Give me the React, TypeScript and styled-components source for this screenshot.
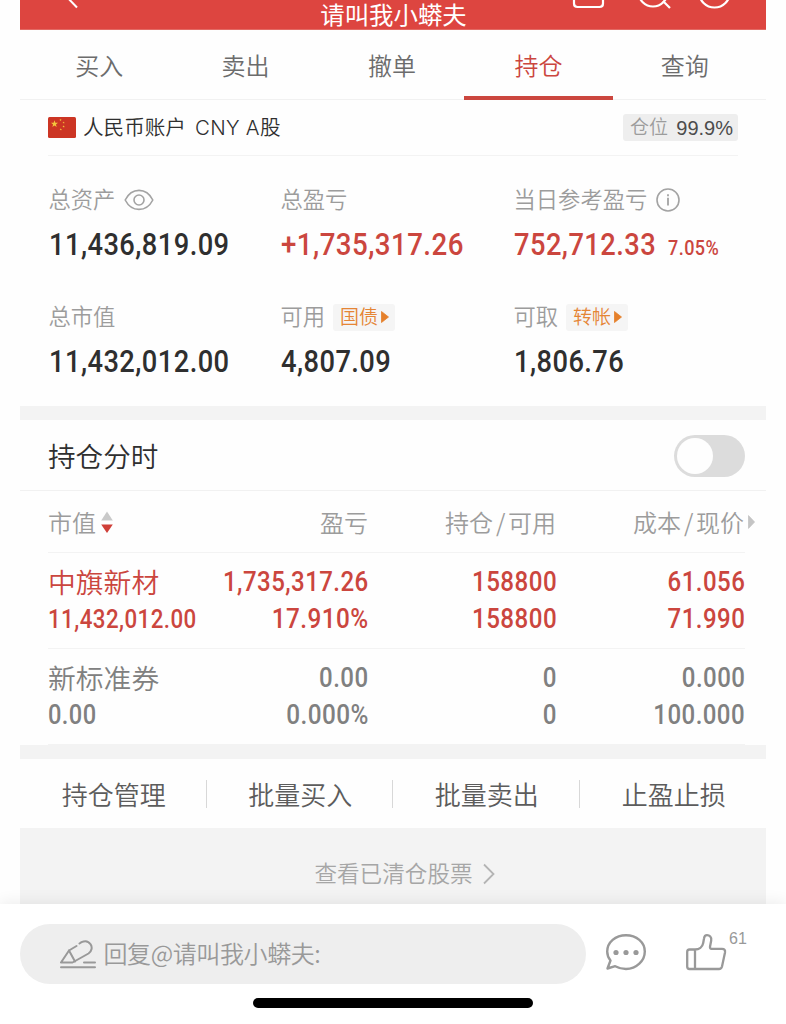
import React from "react";
import styled, { createGlobalStyle } from "styled-components";

const RED = "#cb463e";
const GREY = "#9c9c9c";

const GlobalStyle = createGlobalStyle`
  * { box-sizing: border-box; }
  body {
    margin: 0;
    background: #fefefe;
    font-family: Inter, "Noto Sans CJK SC", sans-serif;
    font-weight: 350;
    color: #2f2f2f;
  }
`;

const Screen = styled.div`
  width: 786px;
  height: 1024px;
  overflow: hidden;
  display: flex;
  flex-direction: column;
`;

const Sheet = styled.main`
  margin: 0 20px;
  height: 904px;
  flex: none;
  background: #fefefe;
`;

const TopBar = styled.header`
  height: 30px;
  background: #dd4540;
  border-bottom: 1px solid #e26a64;
  display: grid;
  grid-template-columns: 200px 1fr 200px;
`;

const TopTitle = styled.h1`
  margin: 0;
  padding-left: 1px;
  font-family: "Noto Sans CJK SC", sans-serif;
  font-size: 24.4px;
  line-height: 27px;
  font-weight: 400;
  color: #fff;
  text-align: center;
  white-space: nowrap;
`;

const Tabs = styled.nav`
  height: 70px;
  padding: 0 8px 0 6px;
  display: flex;
  border-bottom: 1px solid #f1f1f1;
`;

const Tab = styled.div<{ $active?: boolean }>`
  flex: 1 1 0;
  min-width: 0;
  height: 70px;
  display: flex;
  flex-direction: column;
  align-items: center;
  font-size: 24px;
  line-height: 66px;
  padding-top: 4px;
  color: ${(p) => (p.$active ? RED : "#6c6c6c")};
  &::after {
    content: "";
    flex: none;
    width: 149px;
    height: 4px;
    margin: -4px -4px 0;
    background: ${(p) => (p.$active ? RED : "transparent")};
  }
`;

const AccountRow = styled.div`
  height: 56px;
  margin: 0 28px;
  display: flex;
  align-items: center;
  border-bottom: 1px solid #f3f3f3;
`;

const AccountName = styled.div`
  margin-left: 7px;
  flex: 1;
  font-size: 20.6px;
  line-height: 28px;
  padding-top: 1px;
  white-space: pre;
`;

const Latin = styled.span`
  font-family: Inter, sans-serif;
  font-size: 20.4px;
  letter-spacing: 0.3px;
  margin-left: 3px;
`;

const PositionBadge = styled.div`
  width: 115px;
  height: 27px;
  border-radius: 3px;
  background: #eeeeee;
  display: flex;
  align-items: center;
  justify-content: space-between;
  padding: 1px 5px 0 7px;
  font-size: 19px;
  line-height: 26px;
  color: ${GREY};
`;

const BadgeValue = styled.span`
  font-size: 20px;
  font-weight: 400;
  font-family: "Liberation Sans", sans-serif;
  color: #4c4c4c;
`;

const Stats = styled.section`
  height: 250px;
  padding: 26px 0 0 29px;
  display: grid;
  grid-template-columns: 232px 233px 1fr;
  grid-template-rows: 117px 117px;
`;

const Stat = styled.div`
  display: flex;
  flex-direction: column;
`;

const StatLabel = styled.div`
  height: 36px;
  display: flex;
  align-items: center;
  font-size: 22.3px;
  color: ${GREY};
`;

const LabelText = styled.span`
  margin: -4px 0 0 -0.5px;
`;

const StatValue = styled.div<{ $red?: boolean }>`
  height: 54px;
  display: flex;
  align-items: baseline;
  line-height: 54px;
  color: ${(p) => (p.$red ? RED : "#2f2f2f")};
`;

const Num = styled.span<{ $size: number; $scale?: number; $right?: boolean }>`
  display: inline-block;
  font-family: Roboto, sans-serif;
  font-weight: 500;
  font-size: ${(p) => p.$size}px;
  letter-spacing: 0.5px;
  transform: scaleX(${(p) => p.$scale ?? 0.88});
  transform-origin: ${(p) => (p.$right ? "right" : "left")} center;
  white-space: nowrap;
`;

const Rate = styled(Num)`
  margin-left: -8px;
`;

const Chip = styled.span`
  margin-left: 8px;
  height: 27px;
  width: 62px;
  border-radius: 3px;
  background: #f5f5f5;
  color: #e58535;
  font-size: 19px;
  line-height: 24px;
  display: flex;
  align-items: center;
  padding-left: 7px;
  gap: 3px;
  white-space: nowrap;
`;

const ChipText = styled.span`
  margin-top: 1px;
`;

const Band = styled.div<{ $h: number }>`
  height: ${(p) => p.$h}px;
  background: #f3f3f3;
`;

const ToggleRow = styled.div`
  height: 71px;
  padding: 0 21px 0 28px;
  display: flex;
  align-items: center;
  justify-content: space-between;
  border-bottom: 1px solid #f1f1f1;
  font-size: 27.6px;
`;

const Toggle = styled.div`
  width: 71px;
  height: 42px;
  margin-top: 1px;
  border-radius: 21px;
  background: #dcdcdc;
  padding: 3px;
  &::after {
    content: "";
    display: block;
    width: 36px;
    height: 36px;
    border-radius: 50%;
    background: #fefefe;
  }
`;

const TableRow = styled.div<{ $h: number }>`
  height: ${(p) => p.$h}px;
  margin: 0 21px 0 28px;
  display: grid;
  grid-template-columns: 180px 141px 188px 188px;
  border-bottom: 1px solid #f3f3f3;
`;

const HeadCell = styled.div<{ $right?: boolean }>`
  display: flex;
  align-items: center;
  gap: 3px;
  justify-content: ${(p) => (p.$right ? "flex-end" : "flex-start")};
  font-size: 24px;
  color: ${GREY};
  white-space: nowrap;
`;

const HeadText = styled.span`
  display: flex;
  gap: 3px;
  padding-right: 1px;
`;

const Slash = styled.span`
  width: 9px;
  text-align: center;
  font-family: "Noto Sans CJK SC", sans-serif;
`;

const PriceHead = styled(HeadCell)`
  margin-right: -10px;
`;

const Cell = styled.div<{ $right?: boolean; $red?: boolean }>`
  display: flex;
  flex-direction: column;
  align-items: ${(p) => (p.$right ? "flex-end" : "flex-start")};
  padding-top: 11px;
  color: ${(p) => (p.$red ? RED : "#808080")};
  line-height: 37px;
  white-space: nowrap;
`;

const StockName = styled.span`
  font-size: 27.8px;
  line-height: 39px;
  margin-bottom: -2px;
`;

const Actions = styled.div`
  height: 69px;
  display: grid;
  grid-template-columns: repeat(4, 1fr);
  align-items: center;
`;

const Action = styled.div`
  height: 28px;
  display: flex;
  align-items: center;
  justify-content: center;
  font-size: 26px;
  color: #5c5c5c;
  border-right: 1px solid #d8d8d8;
  padding-left: 2px;
  &:last-child { border-right: 0; }
`;

const ClearedLink = styled.div`
  height: 76px;
  background: #f3f3f3;
  display: flex;
  align-items: center;
  justify-content: center;
  gap: 10px;
  padding: 16px 0 0 23px;
  font-size: 22.6px;
  color: #a6a6a6;
`;

const ClearedText = styled.span`
  margin-top: -3px;
`;

const ReplyBar = styled.footer`
  height: 120px;
  flex: none;
  position: relative;
  background: #fff;
  box-shadow: 0 -2px 14px rgba(0, 0, 0, 0.07);
  display: flex;
  flex-direction: column;
  align-items: center;
`;

const ReplyRow = styled.div`
  width: 746px;
  height: 94px;
  padding-top: 20px;
  display: flex;
`;

const ReplyField = styled.div`
  width: 566px;
  height: 60px;
  border-radius: 30px;
  background: #eeeeee;
  padding-left: 39px;
  display: flex;
  align-items: center;
  gap: 6px;
  font-size: 24px;
  color: #999;
`;

const ReplyText = styled.span`
  font-family: "Noto Sans CJK SC", sans-serif;
  letter-spacing: -0.4px;
  margin: -3px 0 0 0.5px;
  white-space: nowrap;
`;

const IconSlot = styled.div<{ $left: number }>`
  margin-left: ${(p) => p.$left}px;
  margin-top: 8px;
`;

const LikeCount = styled.span`
  margin: 6px 0 0 2px;
  font: 400 16px/18px "Liberation Sans", sans-serif;
  color: #999;
`;

const HomeIndicator = styled.div`
  width: 280px;
  height: 10px;
  border-radius: 5px;
  background: #000;
`;

const star = (cx: number, cy: number, r: number) =>
  Array.from({ length: 10 }, (_, i) => {
    const a = (Math.PI / 5) * i - Math.PI / 2;
    const d = i % 2 ? r * 0.4 : r;
    return `${(cx + d * Math.cos(a)).toFixed(2)},${(cy + d * Math.sin(a)).toFixed(2)}`;
  }).join(" ");

const Flag = () => (
  <svg width="28" height="21" viewBox="0 0 28 21">
    <rect width="28" height="21" rx="1.5" fill="#cc3524" />
    <g fill="#f3c63c">
      <polygon points={star(6.5, 7, 3.7)} />
      <polygon points={star(12.5, 3, 1.2)} />
      <polygon points={star(15.6, 5.6, 1.2)} />
      <polygon points={star(15.6, 9.5, 1.2)} />
      <polygon points={star(12.8, 12.4, 1.2)} />
    </g>
  </svg>
);

const LabelIcon = styled.svg`
  flex: none;
  margin: -1px 0 0 8.5px;
`;

const Eye = () => (
  <LabelIcon width="30" height="22" viewBox="0 0 30 22" fill="none" stroke="#a3a3a3" strokeWidth="1.6">
    <path d="M1.2 11C4.5 4.5 9.4 1.4 15 1.4S25.500 4.500 28.800 11C25.500 17.500 20.600 20.400 15 20.400S4.500 17.500 1.200 11Z" />
    <circle cx="15" cy="11" r="5" />
  </LabelIcon>
);

const Info = () => (
  <LabelIcon width="24" height="24" viewBox="0 0 24 24" fill="none" stroke="#a3a3a3" strokeWidth="1.6">
    <circle cx="12" cy="12" r="11" />
    <path d="M12 9.800V17.500M12 6.300V8.200" strokeWidth="1.800" />
  </LabelIcon>
);

const Caret = ({ color, w, h }: { color: string; w: number; h: number }) => (
  <svg width={w} height={h} viewBox="0 0 8 12" preserveAspectRatio="none">
    <path d="M0.500 0.500L7.500 6L0.500 11.500Z" fill={color} stroke={color} strokeWidth="0.8" strokeLinejoin="round" />
  </svg>
);

const SortIcon = styled.svg`
  margin: 2px 0 0 1px;
`;

const SortArrows = () => (
  <SortIcon width="12" height="23" viewBox="0 0 12 23">
    <path d="M6 0.500L11.800 9.500H0.200Z" fill="#c9c9c9" />
    <path d="M6 22L0.200 13.500H11.800Z" fill="#cf3f38" />
  </SortIcon>
);

const tabs = ["买入", "卖出", "撤单", "持仓", "查询"];
const actions = ["持仓管理", "批量买入", "批量卖出", "止盈止损"];

const holdings = [
  { name: "中旗新材", value: "11,432,012.00", small: true, gain: "1,735,317.26", rate: "17.910%", held: "158800", free: "158800", cost: "61.056", price: "71.990", red: true },
  { name: "新标准券", value: "0.00", small: false, gain: "0.00", rate: "0.000%", held: "0", free: "0", cost: "0.000", price: "100.000", red: false },
];

export default function App() {
  return (
    <Screen>
      <GlobalStyle />
      <Sheet>
        <TopBar>
          <svg width="200" height="29" viewBox="0 0 200 29" fill="none" stroke="#fff" strokeWidth="2">
            <path d="M44 -6L57 7.500" />
          </svg>
          <TopTitle>请叫我小蟒夫</TopTitle>
          <svg width="200" height="29" viewBox="0 0 200 29" fill="none" stroke="#fff" strokeWidth="2.200">
            <path d="M8 -10V3.500Q8 7 11.500 7H33.500Q37 7 37 3.500V-10" />
            <circle cx="87" cy="-8" r="14.500" />
            <path d="M97 1L104 8" />
            <circle cx="148.500" cy="-8" r="15.500" />
          </svg>
        </TopBar>
        <Tabs>
          {tabs.map((t) => (
            <Tab key={t} $active={t === "持仓"}>{t}</Tab>
          ))}
        </Tabs>
        <AccountRow>
          <Flag />
          <AccountName>人民币账户<Latin> CNY A</Latin>股</AccountName>
          <PositionBadge>仓位<BadgeValue>99.9%</BadgeValue></PositionBadge>
        </AccountRow>
        <Stats>
          <Stat>
            <StatLabel><LabelText>总资产</LabelText><Eye /></StatLabel>
            <StatValue><Num $size={31}>11,436,819.09</Num></StatValue>
          </Stat>
          <Stat>
            <StatLabel><LabelText>总盈亏</LabelText></StatLabel>
            <StatValue $red><Num $size={31} $scale={0.893}>+1,735,317.26</Num></StatValue>
          </Stat>
          <Stat>
            <StatLabel><LabelText>当日参考盈亏</LabelText><Info /></StatLabel>
            <StatValue $red>
              <Num $size={31}>752,712.33</Num>
              <Rate $size={20.5}>7.05%</Rate>
            </StatValue>
          </Stat>
          <Stat>
            <StatLabel><LabelText>总市值</LabelText></StatLabel>
            <StatValue><Num $size={31}>11,432,012.00</Num></StatValue>
          </Stat>
          <Stat>
            <StatLabel><LabelText>可用</LabelText><Chip><ChipText>国债</ChipText><Caret color="#e5802b" w={8} h={12} /></Chip></StatLabel>
            <StatValue><Num $size={31}>4,807.09</Num></StatValue>
          </Stat>
          <Stat>
            <StatLabel><LabelText>可取</LabelText><Chip><ChipText>转帐</ChipText><Caret color="#e5802b" w={8} h={12} /></Chip></StatLabel>
            <StatValue><Num $size={31}>1,806.76</Num></StatValue>
          </Stat>
        </Stats>
        <Band $h={14} />
        <ToggleRow>持仓分时<Toggle /></ToggleRow>
        <TableRow $h={62}>
          <HeadCell><HeadText>市值</HeadText><SortArrows /></HeadCell>
          <HeadCell $right><HeadText>盈亏</HeadText></HeadCell>
          <HeadCell $right><HeadText>持仓<Slash>/</Slash>可用</HeadText></HeadCell>
          <PriceHead $right><HeadText>成本<Slash>/</Slash>现价</HeadText><Caret color="#c4c4c4" w={7} h={14} /></PriceHead>
        </TableRow>
        {holdings.map((h) => (
          <TableRow key={h.name} $h={96}>
            <Cell $red={h.red}>
              <StockName>{h.name}</StockName>
              <Num $size={h.small ? 25.5 : 27} $scale={0.875}>{h.value}</Num>
            </Cell>
            <Cell $right $red={h.red}>
              <Num $right $size={27} $scale={0.89}>{h.gain}</Num>
              <Num $right $size={27} $scale={0.9}>{h.rate}</Num>
            </Cell>
            <Cell $right $red={h.red}>
              <Num $right $size={27} $scale={0.895}>{h.held}</Num>
              <Num $right $size={27} $scale={0.895}>{h.free}</Num>
            </Cell>
            <Cell $right $red={h.red}>
              <Num $right $size={27} $scale={0.89}>{h.cost}</Num>
              <Num $right $size={27} $scale={0.89}>{h.price}</Num>
            </Cell>
          </TableRow>
        ))}
        <Band $h={14} />
        <Actions>
          {actions.map((a) => <Action key={a}>{a}</Action>)}
        </Actions>
        <ClearedLink>
          <ClearedText>查看已清仓股票</ClearedText>
          <svg width="12" height="22" viewBox="0 0 12 22" fill="none" stroke="#b4b4b4" strokeWidth="1.800">
            <path d="M1 1.500L10.500 11L1 20.500" />
          </svg>
        </ClearedLink>
      </Sheet>
      <ReplyBar>
        <ReplyRow>
          <ReplyField>
            <svg width="38" height="30" viewBox="0 0 38 30" fill="none" stroke="#999" strokeWidth="2" strokeLinecap="round" strokeLinejoin="round">
              <path d="M17.500 7L10 11.500L2 23.500H13.500L29.500 14.500C33 12 33.500 8 31.500 5.200C29.500 2.200 26 1.500 22.500 3.200L20.500 4.500" />
              <path d="M10 11.500L16 22.500M25 23.500H36M2 28.300H36" />
            </svg>
            <ReplyText>回复@请叫我小蟒夫:</ReplyText>
          </ReplyField>
          <IconSlot $left={19}>
            <svg width="42" height="40" viewBox="0 0 42 40" fill="none" stroke="#999" strokeWidth="2.400" strokeLinejoin="round">
              <path d="M5.500 28.500C3 25.500 2.200 22.500 2.200 19.500C2.200 10.300 10.500 3.200 21 3.200S39.800 10.300 39.800 19.500S31.500 37 21 37C17 37 13.500 36 10.200 34.200L2.500 36.500Z" />
              <g fill="#999" stroke="none"><circle cx="11" cy="20.500" r="2.600" /><circle cx="21" cy="20.500" r="2.600" /><circle cx="31" cy="20.500" r="2.600" /></g>
            </svg>
          </IconSlot>
          <IconSlot $left={38}>
            <svg width="42" height="40" viewBox="0 0 42 40" fill="none" stroke="#999" strokeWidth="2.300" strokeLinejoin="round">
              <path d="M10 17.500H4.500Q2.200 17.500 2.200 20V34.500Q2.200 37 4.500 37H34Q36.300 37 37 34.500L40 20.500Q40.600 16.800 37 16.800H26.500Q24.800 16.800 25 14.800L26.200 8.500C26.800 5 24.500 3.200 22 3.200C19.800 3.200 19.300 4.200 19 6.500L18.200 11C17.500 15 14 17.500 10 17.500ZM10 17.500V37" />
            </svg>
          </IconSlot>
          <LikeCount>61</LikeCount>
        </ReplyRow>
        <HomeIndicator />
      </ReplyBar>
    </Screen>
  );
}
